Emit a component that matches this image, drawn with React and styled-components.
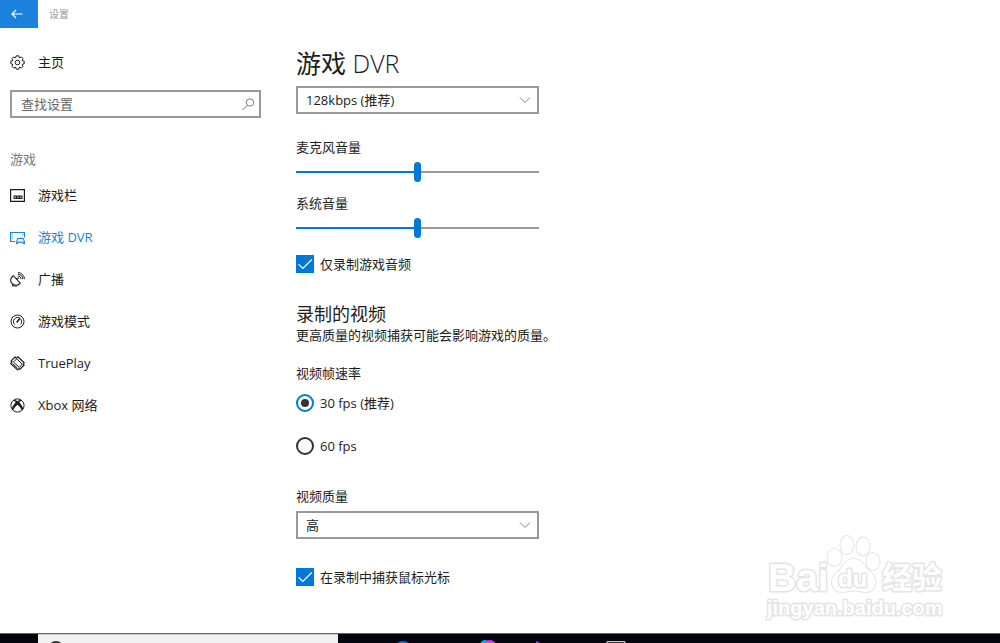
import React, { useState } from "react";
import styled, { createGlobalStyle } from "styled-components";

const GlobalStyle = createGlobalStyle`
  *, *::before, *::after { box-sizing: border-box; }
  body {
    margin: 0;
    background: #fff;
    color: #1c1c1c;
    font: 13px/20px "Open Sans", "Noto Sans CJK SC", sans-serif;
  }
  button, input, select { font: inherit; color: inherit; margin: 0; }
`;

const Page = styled.div`
  min-height: 100vh;
  display: flex;
  flex-direction: column;
  position: relative;
`;

const TitleBar = styled.header`
  display: flex;
  align-items: center;
  gap: 11px;
  height: 28px;
  color: #999;
  font-size: 10px;
`;

const BackButton = styled.button`
  width: 38px;
  height: 28px;
  border: 0;
  padding: 0 4px 0 0;
  background: #1a82dc;
  display: grid;
  place-items: center;
`;

const Body = styled.div`
  flex: 1;
  display: grid;
  grid-template-columns: 272px 1fr;
`;

const Sidebar = styled.nav`
  padding: 13px 11px 0 10px;
`;

const NavLink = styled.a`
  display: flex;
  align-items: center;
  gap: 13px;
  height: 42px;
  color: ${(p) => (p.$active ? "#1a82dc" : "#1c1c1c")};
  text-decoration: none;
`;

const Icon = styled.svg`
  width: 15px;
  height: 15px;
  flex: none;
  fill: none;
  stroke: currentColor;
`;

const SearchBox = styled.label`
  display: flex;
  align-items: center;
  height: 28px;
  margin-top: 7px;
  padding: 0 3px 0 9px;
  border: 2px solid #999;
`;

const SearchInput = styled.input`
  flex: 1;
  min-width: 0;
  height: 20px;
  border: 0;
  padding: 0;
  outline: 0;
  background: none;
  &::placeholder { color: #666; opacity: 1; }
`;

const NavHeading = styled.div`
  margin-top: 31px;
  margin-bottom: 5px;
  color: #777;
`;

const Content = styled.main`
  padding: 19px 24px 36px;
`;

const Title = styled.h1`
  margin: 0 0 7px;
  font-size: 25px;
  line-height: 32px;
  font-weight: 400;
`;

const LightText = styled.span`
  font-weight: 300;
`;

const SectionTitle = styled.h2`
  margin: 29px 0 0;
  font-size: 18px;
  line-height: 22px;
  font-weight: 400;
`;

const Note = styled.p`
  margin: 0;
`;

const FieldLabel = styled.label`
  display: block;
  margin-top: ${(p) => p.$top}px;
`;

const Group = styled.fieldset`
  margin: 18px 0 0;
  padding: 0;
  border: 0;
`;

const Legend = styled.legend`
  padding: 0;
`;

const SelectWrap = styled.div`
  position: relative;
  width: 243px;
  margin-top: ${(p) => p.$top || 0}px;
`;

const Select = styled.select`
  display: block;
  appearance: none;
  width: 100%;
  height: 28px;
  padding: 0 8px;
  border: 2px solid #999;
  border-radius: 0;
  background: #fff;
`;

const Chevron = styled.svg`
  position: absolute;
  right: 8px;
  top: 10px;
  width: 12px;
  height: 8px;
  fill: none;
  stroke: #888;
  pointer-events: none;
`;

const Slider = styled.input`
  display: block;
  appearance: none;
  width: 243px;
  height: 20px;
  margin-top: 5px;
  background: linear-gradient(#0078d7, #0078d7) left center / var(--level) 2px no-repeat,
    linear-gradient(#999, #999) center / 100% 2px no-repeat;
  &::-webkit-slider-thumb {
    appearance: none;
    width: 7px;
    height: 20px;
    border-radius: 4px;
    background: #0078d7;
  }
`;

const Choice = styled.label`
  display: flex;
  align-items: center;
  gap: 6px;
  height: 20px;
  margin-top: ${(p) => p.$top}px;
`;

const CheckWrap = styled.span`
  display: grid;
  > * { grid-area: 1 / 1; }
`;

const CheckInput = styled.input`
  appearance: none;
  width: 18px;
  height: 18px;
  border: 2px solid #333;
  &:checked { background: #0078d7; border-color: #0078d7; }
  &:not(:checked) + svg { visibility: hidden; }
`;

const Tick = styled.svg`
  width: 18px;
  height: 18px;
  fill: none;
  stroke: #fff;
  pointer-events: none;
`;

const RadioInput = styled.input`
  appearance: none;
  display: grid;
  place-items: center;
  width: 18px;
  height: 18px;
  border: 2px solid #333;
  border-radius: 50%;
  &:checked { border-color: #0078d7; }
  &:checked::before {
    content: "";
    width: 8px;
    height: 8px;
    border-radius: 50%;
    background: #333;
  }
`;

const Taskbar = styled.footer`
  display: flex;
  height: 10px;
  overflow: hidden;
  background: #02050b;
  border-top: 1px solid #666;
`;

const TaskSearch = styled.div`
  width: 300px;
  margin-left: 38px;
  background: #f1f1f1;
  border-top: 1px solid #ccc;
`;

const SearchRing = styled.svg`
  display: block;
  width: 40px;
  height: 8px;
  fill: none;
  stroke: #333;
  stroke-width: 2px;
`;

const TaskIcons = styled.svg`
  width: 300px;
  height: 9px;
`;

const Watermark = styled.svg`
  position: absolute;
  right: 50px;
  bottom: 18px;
  width: 190px;
  height: 95px;
  fill: #fff;
  stroke: #e4e4e4;
  stroke-width: 3px;
  stroke-linejoin: round;
  paint-order: stroke;
  font-family: "Liberation Sans", "Noto Sans CJK SC", sans-serif;
  font-weight: 700;
  pointer-events: none;
`;

const gearPath = (() => {
  const pts = [];
  for (let i = 0; i < 8; i++) {
    [[-0.29, 5.3], [-0.2, 6.8], [0.2, 6.8], [0.29, 5.3]].forEach(([d, r]) => {
      const a = (i * Math.PI) / 4 + d;
      pts.push(`${(7.5 + r * Math.cos(a)).toFixed(2)} ${(7.5 + r * Math.sin(a)).toFixed(2)}`);
    });
  }
  return `M${pts.join("L")}Z`;
})();

const icons = {
  home: (
    <>
      <path d={gearPath} strokeLinejoin="round" />
      <circle cx="7.5" cy="7.5" r="2.3" />
    </>
  ),
  bar: (
    <>
      <path d="M.6 1.600h13.800v11.800H.6z" strokeWidth="1.200" />
      <path d="M3.500 7.500h9v3.500h-9z" fill="currentColor" stroke="none" />
      <path d="M4.500 9.200h1.500M7.200 9.200h1.500M10 9.200h1.500" stroke="#fff" />
    </>
  ),
  dvr: (
    <>
      <path d="M5 11.500H.6V2.500h13.800V7.500" strokeWidth="1.200" />
      <path d="M2.600 4v6M12.500 4v2" strokeDasharray="1 1" opacity=".6" />
      <path d="M8.300 8.300h4.400c.9 0 1.700 3.700 1.700 5.200-1 .4-1.600-1.300-2.400-1.300H9c-.8 0-1.400 1.700-2.400 1.300 0-1.500.8-5.200 1.700-5.200z" strokeWidth="1.200" />
    </>
  ),
  broadcast: (
    <>
      <path d="M3.200 3.700C.3 5.700-.1 9.200 2 11.400s6 2.600 8.400-.2zM6.800 7.500l1.900-1.900" strokeWidth="1.100" />
      <path d="M2.600 12v2h4.600" />
      <path d="M7.800 4a3 3 0 0 1 3.200 3.200M7.900 2.200a4.900 4.900 0 0 1 4.900 4.900M7.900.6a6.500 6.500 0 0 1 6.500 6.500" />
    </>
  ),
  mode: (
    <>
      <circle cx="7.500" cy="7.500" r="6.500" />
      <path d="M4.900 10.700a4.100 4.100 0 1 1 5.700-.4" />
      <path d="M6.700 8.600l3-4" strokeWidth="1.600" />
    </>
  ),
  trueplay: (
    <>
      <path d="M5 1L1 5.200l1 1L.7 7.600l6.800 6.300 1.400-1.300 1.200.6 4-4.200-.9-1.200 1-1L7.800.8 6.500 2.200z" strokeLinejoin="round" strokeWidth="1.200" />
      <path d="M5 4.400l1.800-1.500 5.400 5.200-2.900 3.400L3.500 6z" />
      <path d="M2.500 7.500l5 4.700" />
    </>
  ),
  xbox: (
    <>
      <circle cx="7.500" cy="7.500" r="6.600" />
      <path d="M3.200 2.400C4.700 1.700 6 2.300 7.500 3.300c1.500-1 2.800-1.600 4.300-.9-1 .3-1.800.9-2.600 1.900 2 2 3.400 4.300 4 6.400l-1.300 1.600C11.300 10.500 9.500 8.300 7.500 6.700c-2 1.600-3.800 3.800-4.400 5.600l-1.300-1.600c.6-2.100 2-4.400 4-6.400-.8-1-1.600-1.600-2.600-1.900z" fill="currentColor" stroke="none" />
    </>
  ),
};

const navItems = [
  ["bar", "游戏栏"],
  ["dvr", "游戏 DVR"],
  ["broadcast", "广播"],
  ["mode", "游戏模式"],
  ["trueplay", "TruePlay"],
  ["xbox", "Xbox 网络"],
];

function NavItem({ icon, active, children }) {
  return (
    <NavLink href="#" $active={active} aria-current={active ? "page" : undefined}>
      <Icon viewBox="0 0 15 15" aria-hidden="true">{icons[icon]}</Icon>
      {children}
    </NavLink>
  );
}

function Dropdown({ id, options, top, label }) {
  return (
    <SelectWrap $top={top}>
      <Select id={id} aria-label={label}>
        {options.map((o) => <option key={o}>{o}</option>)}
      </Select>
      <Chevron viewBox="0 0 12 8" aria-hidden="true"><path d="M1 1.500l5 5 5-5" /></Chevron>
    </SelectWrap>
  );
}

function Volume({ id, label, top }) {
  const [level, setLevel] = useState(50);
  return (
    <>
      <FieldLabel htmlFor={id} $top={top}>{label}</FieldLabel>
      <Slider
        id={id}
        type="range"
        value={level}
        onChange={(e) => setLevel(Number(e.target.value))}
        style={{ "--level": `${level}%` }}
      />
    </>
  );
}

function Checkbox({ children, top }) {
  return (
    <Choice $top={top}>
      <CheckWrap>
        <CheckInput type="checkbox" defaultChecked />
        <Tick viewBox="0 0 18 18" aria-hidden="true"><path d="M2.500 9.200l4.300 4.300 9-9" strokeWidth="1.200" /></Tick>
      </CheckWrap>
      {children}
    </Choice>
  );
}

export default function App() {
  return (
    <Page>
      <GlobalStyle />
      <TitleBar>
        <BackButton aria-label="返回">
          <svg width="12" height="10" viewBox="0 0 12 10" fill="none" stroke="#fff" strokeWidth="1.200">
            <path d="M11.500 5H1M5 1L1 5l4 4" />
          </svg>
        </BackButton>
        设置
      </TitleBar>
      <Body>
        <Sidebar>
          <NavItem icon="home">主页</NavItem>
          <SearchBox>
            <SearchInput type="text" placeholder="查找设置" aria-label="查找设置" />
            <Icon viewBox="0 0 15 15" aria-hidden="true">
              <circle cx="9" cy="5.500" r="3.700" stroke="#777" />
              <path d="M6.300 8.200L1.500 13" stroke="#777" />
            </Icon>
          </SearchBox>
          <NavHeading>游戏</NavHeading>
          {navItems.map(([icon, name]) => (
            <NavItem key={icon} icon={icon} active={icon === "dvr"}>{name}</NavItem>
          ))}
        </Sidebar>
        <Content>
          <Title>游戏 <LightText>DVR</LightText></Title>
          <Dropdown label="音频质量" options={["128kbps (推荐)"]} />
          <Volume id="mic" label="麦克风音量" top={23} />
          <Volume id="system" label="系统音量" top={11} />
          <Checkbox top={16}>仅录制游戏音频</Checkbox>
          <SectionTitle>录制的视频</SectionTitle>
          <Note>更高质量的视频捕获可能会影响游戏的质量。</Note>
          <Group>
            <Legend>视频帧速率</Legend>
            <Choice $top={10}>
              <RadioInput type="radio" name="fps" defaultChecked />
              30 fps (推荐)
            </Choice>
            <Choice $top={23}>
              <RadioInput type="radio" name="fps" />
              60 fps
            </Choice>
          </Group>
          <FieldLabel htmlFor="quality" $top={30}>视频质量</FieldLabel>
          <Dropdown id="quality" options={["高"]} top={5} />
          <Checkbox top={28}>在录制中捕获鼠标光标</Checkbox>
        </Content>
      </Body>
      <Taskbar>
        <TaskSearch>
          <SearchRing viewBox="0 0 40 8" aria-hidden="true">
            <circle cx="18" cy="14" r="7" />
          </SearchRing>
        </TaskSearch>
        <TaskIcons viewBox="338 634 300 9" aria-hidden="true">
          <circle cx="403" cy="650" r="9" fill="#0078d7" />
          <circle cx="485" cy="645" r="5" fill="#1ba1e2" />
          <circle cx="490" cy="646" r="6" fill="#d63af0" />
          <path d="M536 641l7 3h-7z" fill="#7a55c7" />
          <path d="M607 645v-3.500h18v3.500" fill="#333" stroke="#ccc" />
        </TaskIcons>
      </Taskbar>
      <Watermark viewBox="760 530 190 95">
        <text x="768" y="591" fontSize="39">Bai</text>
        <g strokeWidth="2">
          <ellipse cx="834.500" cy="557.500" rx="7" ry="8.500" />
          <ellipse cx="847" cy="545" rx="6.500" ry="9" />
          <ellipse cx="863" cy="546.500" rx="6.500" ry="9" />
          <ellipse cx="873" cy="561.500" rx="6.500" ry="8.500" />
          <path d="M853.500 559c-6 0-9 4-11.500 8.500-3 4-10 7-10 14.500 0 7 5 10 10 10 4 0 7-1.500 11.500-1.500s8 1.500 12 1.500c6 0 10-4 10-10.500 0-7-7-10-10-14.500-3-4.500-6-8-12-8z" />
        </g>
        <text x="838" y="587" fontSize="24">du</text>
        <text x="882" y="588" fontSize="30">经验</text>
        <text x="767" y="615" fontSize="20">jingyan.baidu.com</text>
      </Watermark>
    </Page>
  );
}
